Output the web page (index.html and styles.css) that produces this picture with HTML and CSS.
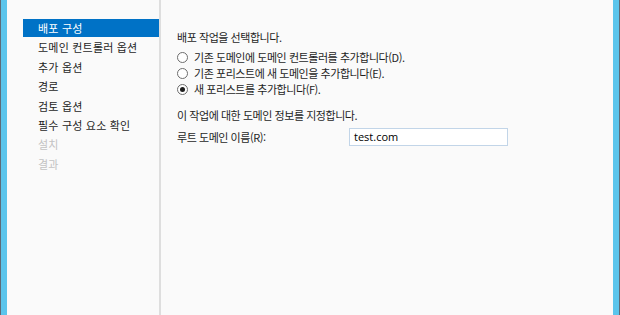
FILE: index.html
```html
<!DOCTYPE html>
<html lang="ko">
<head>
    <meta charset="UTF-8">
    <title>배포 구성</title>
    <link rel="stylesheet" href="styles.css">
</head>
<body>
    <div class="window">
        <div class="wizard">
            <ul class="steps">
                <li class="active">배포 구성</li>
                <li>도메인 컨트롤러 옵션</li>
                <li>추가 옵션</li>
                <li>경로</li>
                <li>검토 옵션</li>
                <li>필수 구성 요소 확인</li>
                <li class="disabled">설치</li>
                <li class="disabled">결과</li>
            </ul>
            <div class="content">
                <p class="label">배포 작업을 선택합니다.</p>
                <div class="options">
                    <label class="option"><span class="radio"></span>기존 도메인에 도메인 컨트롤러를 추가합니다(D).</label>
                    <label class="option"><span class="radio"></span>기존 포리스트에 새 도메인을 추가합니다(E).</label>
                    <label class="option"><span class="radio checked"></span>새 포리스트를 추가합니다(F).</label>
                </div>
                <p class="label info">이 작업에 대한 도메인 정보를 지정합니다.</p>
                <div class="field">
                    <span class="field-name">루트 도메인 이름(R):</span>
                    <div class="input">test.com</div>
                </div>
            </div>
        </div>
    </div>
</body>
</html>
```

FILE: styles.css
```css
html, body {
    margin: 0;
    padding: 0;
    height: 100%;
}
body {
    font-family: "Noto Sans CJK KR", "Noto Sans", sans-serif;
    font-size: 11px;
    color: #1e1e1e;
    background-color: #5bc5ec;
}
.window {
    height: 100%;
    box-sizing: border-box;
    border-left: 1px solid #5d6b78;
    border-right: 1px solid #5d6b78;
    padding: 0 6px;
}
.wizard {
    height: 100%;
    background-color: #fafafa;
    display: flex;
}
.steps {
    list-style: none;
    margin: 0;
    padding: 19px 0 0 16px;
    width: 136px;
    border-right: 2px solid #dedede;
}
.steps li {
    height: 19.4px;
    line-height: 19px;
    padding-left: 15px;
    white-space: nowrap;
    letter-spacing: 0.2px;
}
.steps li.active {
    background-color: #0072c6;
    color: white;
    height: 18px;
    line-height: 18px;
    margin-bottom: 1.4px;
}
.steps li.disabled {
    color: #c3c3c3;
}
.content {
    padding: 29px 0 0 16px;
    flex: 1;
    letter-spacing: -0.45px;
}
.label {
    margin: 0;
    line-height: 16px;
}
.options {
    margin-top: 4px;
}
.option {
    display: flex;
    align-items: center;
    height: 16px;
    white-space: nowrap;
}
.radio {
    width: 9px;
    height: 9px;
    border: 1px solid #6d6d6d;
    border-radius: 50%;
    background: #fff;
    margin-right: 6px;
    position: relative;
    flex-shrink: 0;
}
.radio.checked::after {
    content: "";
    position: absolute;
    left: 2px;
    top: 2px;
    width: 5px;
    height: 5px;
    border-radius: 50%;
    background: #1e1e1e;
}
.info {
    margin-top: 10px;
}
.field {
    display: flex;
    align-items: center;
    margin-top: 5px;
}
.field-name {
    width: 172px;
}
.input {
    width: 149px;
    height: 16px;
    line-height: 16px;
    border: 1px solid #c2d5e8;
    background: #fff;
    padding: 0 4px;
    font-family: "Open Sans", "Noto Sans", sans-serif;
    font-size: 11px;
    letter-spacing: 0;
    color: #000;
}
```
